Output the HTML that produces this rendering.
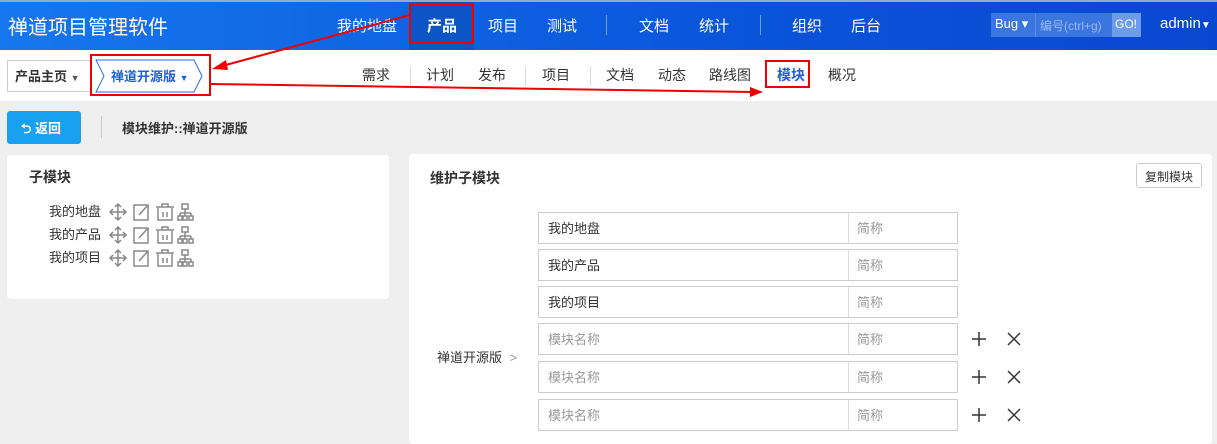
<!DOCTYPE html>
<html><head><meta charset="utf-8"><style>
*{box-sizing:border-box;margin:0;padding:0}
body{width:1217px;height:436px;overflow:hidden;background:#efefef;font-family:"Liberation Sans","Noto Sans CJK SC",sans-serif;font-size:13px;color:#333;position:relative}
.a{position:absolute}
#hd{left:0;top:0;width:1217px;height:50px;background:linear-gradient(90deg,#1677ee,#0a55da 60%,#0a47d0);border-top:2px solid #9ab}
.nv{color:#fff;font-size:15px;top:13px}
.sn{top:65px;font-size:14px;color:#333}
.dv{width:1px;background:#ddd}
.panel{background:#fff;border-radius:4px}
.inp{left:538px;width:420px;height:32px;border:1px solid #ccc;background:#fff;font-size:13px}
.inp span{position:absolute;top:5px;left:9px}
.inp i{position:absolute;left:309px;top:0;width:1px;height:30px;background:#ddd}
.inp b{position:absolute;left:318px;top:5px;font-weight:normal;color:#999}
.ph{color:#999}
</style></head><body>
<div id="hd" class="a">
<div class="a" style="left:8px;top:9px;color:#fff;font-size:20px">禅道项目管理软件</div>
<div class="a" style="left:409px;top:0;width:65px;height:48px;background:#0c55c7"></div>
<div class="a nv" style="left:337px">我的地盘</div>
<div class="a nv" style="left:427px;font-weight:bold">产品</div>
<div class="a nv" style="left:488px">项目</div>
<div class="a nv" style="left:547px">测试</div>
<div class="a" style="left:606px;top:13px;width:1px;height:20px;background:#6a9be8"></div>
<div class="a nv" style="left:639px">文档</div>
<div class="a nv" style="left:699px">统计</div>
<div class="a" style="left:760px;top:13px;width:1px;height:20px;background:#6a9be8"></div>
<div class="a nv" style="left:792px">组织</div>
<div class="a nv" style="left:851px">后台</div>
<div class="a" style="left:991px;top:11px;width:150px;height:24px;background:#3a75e0"></div>
<div class="a" style="left:1112px;top:11px;width:29px;height:24px;background:#6d9cee"></div>
<div class="a" style="left:995px;top:14px;color:#fff;font-size:13px">Bug ▾</div>
<div class="a" style="left:1035px;top:11px;width:1px;height:24px;background:#5a8be6"></div>
<div class="a" style="left:1040px;top:15px;color:#9bb9f0;font-size:12px">编号(ctrl+g)</div>
<div class="a" style="left:1115px;top:15px;color:#fff;font-size:12px">GO!</div>
<div class="a" style="left:1160px;top:13px;color:#fff;font-size:15px">admin<span style="font-size:10px">▼</span></div>
</div>
<div class="a" style="left:0;top:50px;width:1217px;height:51px;background:#fff"></div>
<div class="a" style="left:7px;top:60px;width:83px;height:32px;border:1px solid #ccc;border-right:none"></div>
<div class="a" style="left:15px;top:66px;font-size:13px;font-weight:bold">产品主页 <span style="font-size:9px;color:#555">▼</span></div>
<svg class="a" style="left:92px;top:58px" width="120" height="36"><path d="M4 2 L102 2 L110 18 L102 34 L4 34 L12 18 Z" fill="#fff" stroke="#2a6fe8"/></svg>
<div class="a" style="left:111px;top:66px;font-size:13px;font-weight:bold;color:#1e5fe0">禅道开源版 <span style="font-size:9px">▼</span></div>
<div class="a sn" style="left:362px">需求</div><div class="a dv" style="left:410px;top:66px;height:20px"></div>
<div class="a sn" style="left:426px">计划</div><div class="a sn" style="left:478px">发布</div><div class="a dv" style="left:525px;top:66px;height:20px"></div>
<div class="a sn" style="left:542px">项目</div><div class="a dv" style="left:590px;top:66px;height:20px"></div>
<div class="a sn" style="left:606px">文档</div><div class="a sn" style="left:658px">动态</div><div class="a sn" style="left:709px">路线图</div>
<div class="a sn" style="left:777px;color:#1e5fe0;font-weight:bold">模块</div><div class="a sn" style="left:828px">概况</div>
<div class="a" style="left:409px;top:3px;width:65px;height:41px;border:2px solid #e00"></div>
<div class="a" style="left:90px;top:54px;width:121px;height:42px;border:2px solid #e00"></div>
<div class="a" style="left:765px;top:60px;width:45px;height:28px;border:2px solid #e00"></div>
<svg class="a" style="left:0;top:0" width="1217" height="110"><path d="M410 15 L222 66" stroke="#e00" stroke-width="2"/><path d="M212 69 L226 60 L228 70 Z" fill="#e00"/><path d="M211 84 L752 92" stroke="#e00" stroke-width="2"/><path d="M763 92 L750 87 L750 97 Z" fill="#e00"/></svg>
<div class="a" style="left:7px;top:111px;width:74px;height:33px;background:#1aa0f0;border-radius:3px;color:#fff;font-weight:bold;font-size:13px;padding:7px 0 0 14px">⮌ 返回</div>
<div class="a" style="left:101px;top:116px;width:1px;height:22px;background:#ccc"></div>
<div class="a" style="left:122px;top:118px;font-weight:bold;font-size:13px">模块维护::禅道开源版</div>
<div class="a panel" style="left:7px;top:155px;width:382px;height:144px"></div>
<div class="a" style="left:29px;top:167px;font-weight:bold;font-size:14px">子模块</div>
<div class="a" style="left:49px;top:200px;line-height:23px;font-size:13px">我的地盘<br>我的产品<br>我的项目</div>
<svg class="a" style="left:108px;top:202px" width="92" height="70" fill="none" stroke="#888" stroke-width="1.5">
<g id="r"><path d="M10 2v16M2 10h16M7 5l3-3 3 3M7 15l3 3 3-3M5 7l-3 3 3 3M15 7l3 3-3 3"/><rect x="26" y="3" width="14" height="15"/><path d="M31 13l9-10"/><path d="M48 5h18M54 5V2h6v3M50 6v12h14V6M55 10v5M59 10v5"/><rect x="74" y="2" width="6" height="5"/><path d="M77 7v4M72 11h11M72 11v3M77 11v3M83 11v3"/><rect x="70" y="14" width="4" height="4"/><rect x="75" y="14" width="4" height="4"/><rect x="81" y="14" width="4" height="4"/></g>
<use href="#r" y="23"/><use href="#r" y="46"/></svg>
<div class="a panel" style="left:409px;top:154px;width:803px;height:290px"></div>
<div class="a" style="left:430px;top:168px;font-weight:bold;font-size:14px">维护子模块</div>
<div class="a" style="left:1136px;top:163px;width:66px;height:25px;border:1px solid #ccc;border-radius:3px;font-size:12px;padding:4px 0 0 8px">复制模块</div>
<div class="a" style="left:437px;top:347px;font-size:13px">禅道开源版 <span style="color:#999;margin-left:4px">&gt;</span></div>
<div class="a inp" style="top:212px"><span>我的地盘</span><i></i><b>简称</b></div>
<div class="a inp" style="top:249px"><span>我的产品</span><i></i><b>简称</b></div>
<div class="a inp" style="top:286px"><span>我的项目</span><i></i><b>简称</b></div>
<div class="a inp" style="top:323px"><span class="ph">模块名称</span><i></i><b>简称</b></div>
<div class="a inp" style="top:361px"><span class="ph">模块名称</span><i></i><b>简称</b></div>
<div class="a inp" style="top:399px"><span class="ph">模块名称</span><i></i><b>简称</b></div>
<svg class="a" style="left:970px;top:330px" width="60" height="100" stroke="#333" stroke-width="1.5">
<g id="px"><path d="M9 2v14M2 9h14M38 3l12 12M50 3L38 15"/></g>
<use href="#px" y="38"/><use href="#px" y="76"/></svg>
</body></html>
